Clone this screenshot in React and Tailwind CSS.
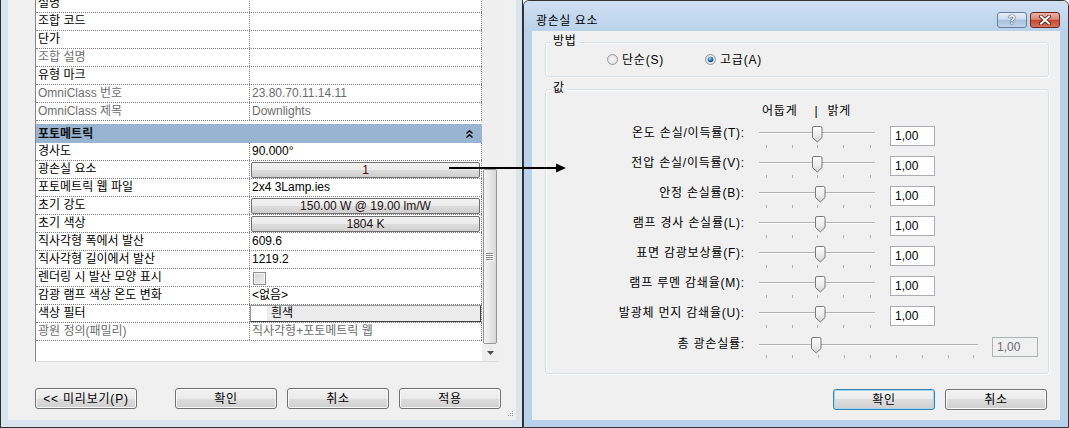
import React from "react";

const FONT = "font-['Liberation_Sans','Noto_Sans_CJK_KR',sans-serif]";
const BTN_BG = "bg-[linear-gradient(#f2f2f2_0%,#ebebeb_50%,#dddddd_50%,#cfcfcf_100%)]";

function Button({ children, className = "", primary = false }) {
  return (
    <div
      className={`flex h-[21px] shrink-0 items-center justify-center rounded-[3px] border ${BTN_BG} text-[12px] leading-[14px] tracking-[0.8px] text-black ${
        primary
          ? "border-[#3c7fb1] shadow-[inset_0_0_0_1px_#9fd8f5]"
          : "border-[#707070] shadow-[inset_0_0_0_1px_#fafafa]"
      } ${className}`}
    >
      {children}
    </div>
  );
}

function GridRow({ label, dim = false, children, className = "" }) {
  return (
    <div className={`flex h-[18px] shrink-0 border-b border-dotted border-[#7f7f7f] ${className}`}>
      <div
        className={`w-[214px] shrink-0 overflow-hidden whitespace-nowrap border-r border-dotted border-[#7f7f7f] pl-[2px] leading-[17px] ${
          dim ? "text-[#6d6d6d]" : "text-black"
        }`}
      >
        {label}
      </div>
      <div
        className={`w-[232px] shrink-0 overflow-hidden whitespace-nowrap border-r border-dotted border-[#7f7f7f] leading-[17px] ${
          dim ? "text-[#6d6d6d]" : "text-black"
        }`}
      >
        {children}
      </div>
    </div>
  );
}

function Val({ children }) {
  return <div className="pl-[2px]">{children}</div>;
}

function CellButton({ children, red = false }) {
  return (
    <div
      className={`mx-px mt-px h-[16px] rounded-[2px] border border-[#707070] ${BTN_BG} text-center leading-[14px] ${
        red ? "text-[#3d0c0c]" : "text-[#1a1010]"
      }`}
    >
      {children}
    </div>
  );
}

function Scrollbar() {
  return (
    <div className="flex w-[16px] shrink-0 flex-col bg-[#efefef]">
      <div className="h-[169px] shrink-0" />
      <div className="mx-px flex h-[175px] shrink-0 items-center justify-center rounded-[2px] border border-[#979797] bg-[linear-gradient(to_right,#f4f4f4,#e6e6e6_50%,#d8d8d8)]">
        <svg width="8" height="8" viewBox="0 0 8 8">
          <path d="M0 0.5h7M0 2.5h7M0 4.5h7M0 6.5h7" stroke="#8a8a8a" strokeWidth="1" />
          <path d="M1 1.5h7M1 3.5h7M1 5.5h7M1 7.5h7" stroke="#ffffff" strokeWidth="1" />
        </svg>
      </div>
      <div className="flex flex-1 items-center justify-center">
        <svg width="7" height="4" viewBox="0 0 7 4">
          <path d="M0 0h7L3.5 4z" fill="#4d4d4d" />
        </svg>
      </div>
    </div>
  );
}

function LeftWindow() {
  return (
    <div className="flex h-[428px] w-[523px] shrink-0 border-x border-b border-[#2e2e2e] bg-[#d9e4f1] pb-[7px] pl-[7px] pr-[6px]">
      <div className="flex flex-1 flex-col bg-[#f0f0f0]">
        {/* property grid */}
        <div className="ml-[27px] flex h-[362px] w-[463px] shrink-0 border-b border-l border-b-[#dcdcdc] border-l-[#828790]">
          <div className="flex w-[446px] shrink-0 flex-col overflow-hidden bg-white text-[12px]">
            <GridRow label="설명" className="-mt-[5px]" />
            <GridRow label="조합 코드" />
            <GridRow label="단가" />
            <GridRow label="조합 설명" dim />
            <GridRow label="유형 마크" />
            <GridRow label="OmniClass 번호" dim>
              <Val>23.80.70.11.14.11</Val>
            </GridRow>
            <GridRow label="OmniClass 제목" dim>
              <Val>Downlights</Val>
            </GridRow>
            <div className="mt-[3px] flex h-[19px] shrink-0 items-center bg-[#99b4d1] pl-[2px] pr-[9px]">
              <span className="font-bold leading-[18px] text-[#101010]">포토메트릭</span>
              <svg className="ml-auto" width="7" height="8" viewBox="0 0 7 8">
                <path d="M0.5 3.5L3.5 0.8L6.5 3.5M0.5 7.5L3.5 4.8L6.5 7.5" fill="none" stroke="#000" strokeWidth="1.4" />
              </svg>
            </div>
            <GridRow label="경사도">
              <Val>90.000°</Val>
            </GridRow>
            <GridRow label="광손실 요소">
              <CellButton red>1</CellButton>
            </GridRow>
            <GridRow label="포토메트릭 웹 파일">
              <Val>2x4 3Lamp.ies</Val>
            </GridRow>
            <GridRow label="초기 강도">
              <CellButton>150.00 W @ 19.00 lm/W</CellButton>
            </GridRow>
            <GridRow label="초기 색상">
              <CellButton>1804 K</CellButton>
            </GridRow>
            <GridRow label="직사각형 폭에서 발산">
              <Val>609.6</Val>
            </GridRow>
            <GridRow label="직사각형 길이에서 발산">
              <Val>1219.2</Val>
            </GridRow>
            <GridRow label="렌더링 시 발산 모양 표시">
              <div className="ml-[3px] mt-[3px] h-[13px] w-[13px] border border-[#8f8f8f] bg-[linear-gradient(135deg,#d2d2d2,#f2f2f2)] shadow-[inset_0_0_0_1px_#f4f4f4]" />
            </GridRow>
            <GridRow label="감광 램프 색상 온도 변화">
              <Val>&lt;없음&gt;</Val>
            </GridRow>
            <GridRow label="색상 필터">
              <div className="h-[17px] border border-[#9a9a9a] border-b-[#404040] border-r-[#404040] bg-[linear-gradient(to_right,#ffffff_16px,#ececec_16px)] pl-[20px] text-left leading-[15px]">
                흰색
              </div>
            </GridRow>
            <GridRow label="광원 정의(패밀리)" dim>
              <Val>직사각형+포토메트릭 웹</Val>
            </GridRow>
          </div>
          <Scrollbar />
        </div>

        {/* buttons */}
        <div className="mt-[26px] flex pl-[27px]">
          <Button className="w-[102px]">&lt;&lt; 미리보기(P)</Button>
          <Button className="ml-[38px] w-[102px]">확인</Button>
          <Button className="ml-[10px] w-[102px]">취소</Button>
          <Button className="ml-[10px] w-[102px]">적용</Button>
        </div>
        <div className="flex flex-1 items-end justify-end pb-[2px] pr-[2px]">
          <svg width="8" height="8" viewBox="0 0 8 8">
            <path d="M6 1h1v1H6zM4 3h1v1H4zM6 3h1v1H6zM2 5h1v1H2zM4 5h1v1H4zM6 5h1v1H6z" fill="#9aa3ad" />
          </svg>
        </div>
      </div>
    </div>
  );
}

function Radio({ checked = false }) {
  return (
    <svg width="11" height="11" viewBox="0 0 11 11" className="shrink-0">
      <defs>
        <radialGradient id="rbg" cx="50%" cy="50%" r="60%">
          <stop offset="0%" stopColor="#fbfbfb" />
          <stop offset="100%" stopColor="#d6d6d6" />
        </radialGradient>
        <radialGradient id="rdot" cx="40%" cy="35%" r="70%">
          <stop offset="0%" stopColor="#9fdcff" />
          <stop offset="60%" stopColor="#1f6fb5" />
          <stop offset="100%" stopColor="#0d3d6e" />
        </radialGradient>
      </defs>
      <circle cx="5.5" cy="5.5" r="5" fill="url(#rbg)" stroke="#9a9a9a" />
      {checked && <circle cx="5.5" cy="5.5" r="2.8" fill="url(#rdot)" />}
    </svg>
  );
}

function Slider({ width, thumbX, ticks, trackY = 14, thumbY = 8 }) {
  return (
    <svg width={width} height="30" viewBox={`0 0 ${width} 30`} className="block shrink-0">
      <defs>
        <linearGradient id="thumbg" x1="0" y1="0" x2="0" y2="1">
          <stop offset="0%" stopColor="#fdfdfd" />
          <stop offset="55%" stopColor="#ececec" />
          <stop offset="100%" stopColor="#d3d3d3" />
        </linearGradient>
      </defs>
      <line x1="0" x2={width} y1={trackY + 0.5} y2={trackY + 0.5} stroke="#b2b2b2" />
      <line x1="0" x2={width} y1={trackY + 1.5} y2={trackY + 1.5} stroke="#ffffff" />
      {ticks.map((t) => (
        <line key={t} x1={t + 0.5} x2={t + 0.5} y1="27" y2="30" stroke="#b0b0b0" />
      ))}
      <path
        transform={`translate(${thumbX} ${thumbY})`}
        d="M0.5 2 Q0.5 0.5 2 0.5 H8.5 Q10 0.5 10 2 V11.5 L5.25 16 L0.5 11.5 Z"
        fill="url(#thumbg)"
        stroke="#787878"
      />
    </svg>
  );
}

const SHORT_TICKS = [7, 33, 58, 84, 111];
const LONG_TICKS = [7, 33, 59, 85, 111, 137, 163, 189, 214];

const ROWS = [
  ["온도 손실/이득률(T):", 53],
  ["전압 손실/이득률(V):", 53],
  ["안정 손실률(B):", 56],
  ["램프 경사 손실률(L):", 56],
  ["표면 감광보상률(F):", 56],
  ["램프 루멘 감쇄율(M):", 56],
  ["발광체 먼지 감쇄율(U):", 56],
];

function Group({ label, className = "", children }) {
  return (
    <div className={`relative ml-[13px] mr-[11px] shrink-0 rounded-[3px] border border-[#d5dfe5] shadow-[inset_1px_1px_0_#ffffff,1px_1px_0_#ffffff] ${className}`}>
      <span className="absolute left-[5px] top-[-9px] bg-[#f0f0f0] px-[2px] leading-[14px]">{label}</span>
      {children}
    </div>
  );
}

function Dialog() {
  return (
    <div className="flex h-[428px] flex-1 flex-col rounded-t-[6px] border border-[#343434] bg-[#b9d1ea]">
      {/* title bar */}
      <div className="flex h-[30px] shrink-0 items-start rounded-t-[5px] bg-[linear-gradient(#cfe0f2,#bad2ea)] pl-[12px] pr-[8px]">
        <span className="mt-[13px] text-[12px] leading-[14px] tracking-[0.6px] text-black">광손실 요소</span>
        <div className="ml-auto mt-[11px] flex gap-[3px]">
          <div className="flex h-[16px] w-[30px] items-center justify-center rounded-[3px] border border-[#6a7f9c] bg-[linear-gradient(#e6eef8_0%,#cddcee_45%,#aac2df_50%,#bed2ea_100%)]">
            <span className="text-[12px] font-bold leading-[12px] text-white [text-shadow:0_0_1px_#2a3d55,0_0_1px_#2a3d55,0_0_1px_#2a3d55]">
              ?
            </span>
          </div>
          <div className="flex h-[16px] w-[30px] items-center justify-center rounded-[3px] border border-[#6e2a22] bg-[linear-gradient(#eab0a2_0%,#dc8a77_45%,#c9452b_50%,#d7735c_100%)]">
            <svg width="12" height="10" viewBox="0 0 12 10">
              <path d="M2 1.5L10 8.5M10 1.5L2 8.5" stroke="#3b1410" strokeWidth="3.6" strokeLinecap="square" />
              <path d="M2 1.5L10 8.5M10 1.5L2 8.5" stroke="#ffffff" strokeWidth="2" strokeLinecap="square" />
            </svg>
          </div>
        </div>
      </div>

      {/* content */}
      <div className="mx-[8px] flex h-[389px] shrink-0 flex-col bg-[#f0f0f0] text-[12px] tracking-[0.8px] text-black">
        <Group label="방법" className="mt-[11px] h-[35px]">
          <div className="flex h-full items-center pl-[61px]">
            <div className="flex w-[98px] items-center gap-[4px]">
              <Radio />
              <span className="leading-[14px]">단순(S)</span>
            </div>
            <div className="flex items-center gap-[4px]">
              <Radio checked />
              <span className="leading-[14px]">고급(A)</span>
            </div>
          </div>
        </Group>

        <Group label="값" className="mt-[12px] h-[285px] pt-[14px]">
          <div className="flex h-[14px] pl-[216px] leading-[14px]">
            <span>어둡게</span>
            <span className="ml-[17px]">|</span>
            <span className="ml-[9px]">밝게</span>
          </div>
          {ROWS.map(([label, thumb]) => (
            <div key={label} className="flex h-[30px]">
              <div className="mt-[8px] w-[199px] shrink-0 whitespace-nowrap text-right leading-[14px]">{label}</div>
              <div className="ml-[14px]">
                <Slider width={116} thumbX={thumb} ticks={SHORT_TICKS} />
              </div>
              <div className="ml-[15px] mt-[8px] h-[20px] w-[45px] shrink-0 border border-[#abadb3] bg-white pl-[4px] leading-[18px] tracking-normal">
                1,00
              </div>
            </div>
          ))}
          <div className="flex h-[30px]">
            <div className="mt-[9px] w-[199px] shrink-0 whitespace-nowrap text-right leading-[14px]">총 광손실률:</div>
            <div className="ml-[14px]">
              <Slider width={219} thumbX={52} ticks={LONG_TICKS} trackY={16} thumbY={9} />
            </div>
            <div className="ml-[14px] mt-[9px] h-[20px] w-[46px] shrink-0 border border-[#adb2b5] bg-[#f0f0f0] pl-[4px] leading-[18px] tracking-normal text-[#6d6d6d]">
              1,00
            </div>
          </div>
        </Group>

        <div className="mr-[13px] mt-[15px] flex justify-end gap-[10px]">
          <Button primary className="w-[102px]">
            확인
          </Button>
          <Button className="w-[102px]">취소</Button>
        </div>
      </div>
    </div>
  );
}

export default function App() {
  return (
    <div className={`relative flex h-[428px] w-[1069px] overflow-hidden bg-white text-[12px] ${FONT}`}>
      <LeftWindow />
      <Dialog />
      <svg className="pointer-events-none absolute left-0 top-0" width="1069" height="428" viewBox="0 0 1069 428">
        <line x1="449" y1="168" x2="558" y2="168" stroke="#000" strokeWidth="2" />
        <path d="M556 163.5L566 168L556 172.5Z" fill="#000" />
      </svg>
    </div>
  );
}
